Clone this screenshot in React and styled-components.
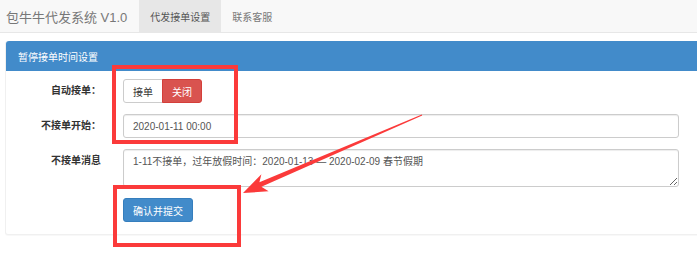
import React from "react";
import styled, { createGlobalStyle } from "styled-components";

const GlobalStyle = createGlobalStyle`
  html, body {
    margin: 0;
    padding: 0;
    background: #fff;
    overflow: hidden;
  }
  body {
    font-family: "Liberation Sans", "Noto Sans CJK SC", sans-serif;
    font-size: 10px;
    color: #333;
  }
`;

const Page = styled.div`
  position: relative;
  width: 697px;
  height: 279px;
`;

const Navbar = styled.nav`
  display: flex;
  align-items: stretch;
  height: 32px;
  background: #f8f8f8;
  border-bottom: 1px solid #e7e7e7;
`;

const Brand = styled.div`
  display: flex;
  align-items: center;
  padding: 0 12px 0 6px;
  font-size: 13px;
  color: #777;
`;

const NavItem = styled.div`
  display: flex;
  align-items: center;
  padding: 0 11px;
  font-size: 10px;
  color: ${(p) => (p.active ? "#555" : "#777")};
  background: ${(p) => (p.active ? "#e7e7e7" : "transparent")};
`;

const Panel = styled.section`
  width: 720px;
  margin: 8px 0 0 5px;
  background: #fff;
  border: 1px solid #f0f0f0;
  border-top: 0;
  border-radius: 3px;
  box-shadow: 0 1px 1px rgba(0, 0, 0, 0.03);
`;

const PanelHeading = styled.div`
  display: flex;
  align-items: center;
  height: 30px;
  padding-left: 12px;
  background: #428bca;
  border-radius: 3px 3px 0 0;
  color: #fff;
  font-size: 10px;
`;

const PanelBody = styled.div`
  display: flex;
  flex-direction: column;
  gap: 11px;
  padding: 8px 47px 12px 0;
`;

const FormRow = styled.div`
  display: flex;
  align-items: flex-start;
  gap: 22px;
`;

const Label = styled.label`
  width: 95px;
  flex: none;
  text-align: right;
  font-weight: bold;
  line-height: 24px;
  color: #333;
`;

const Control = styled.div`
  flex: 1;
  display: flex;
`;

const BtnGroup = styled.div`
  display: flex;
`;

const ToggleBtn = styled.button`
  height: 24px;
  padding: 0 9px;
  font-family: inherit;
  font-size: 10px;
  border: 1px solid ${(p) => (p.on ? "#d43f3a" : "#ccc")};
  background: ${(p) => (p.on ? "#d9534f" : "#fff")};
  color: ${(p) => (p.on ? "#fff" : "#333")};
  border-radius: 0;
  &:first-child {
    border-radius: 3px 0 0 3px;
  }
  &:last-child {
    border-radius: 0 3px 3px 0;
    margin-left: -1px;
  }
`;

const TextInput = styled.input`
  flex: 1;
  box-sizing: border-box;
  height: 24px;
  padding: 0 9px;
  font-family: inherit;
  font-size: 10px;
  color: #555;
  border: 1px solid #ccc;
  border-radius: 3px;
  box-shadow: inset 0 1px 1px rgba(0, 0, 0, 0.075);
  outline: none;
`;

const TextArea = styled.textarea`
  flex: 1;
  box-sizing: border-box;
  height: 38px;
  padding: 5px 9px;
  font-family: inherit;
  font-size: 10px;
  line-height: 14px;
  color: #555;
  border: 1px solid #ccc;
  border-radius: 3px;
  box-shadow: inset 0 1px 1px rgba(0, 0, 0, 0.075);
  outline: none;
`;

const SubmitBtn = styled.button`
  height: 24px;
  padding: 0 9px;
  font-family: inherit;
  font-size: 10px;
  color: #fff;
  background: #428bca;
  border: 1px solid #357ebd;
  border-radius: 3px;
`;

const Overlay = styled.svg`
  position: absolute;
  left: 0;
  top: 0;
  pointer-events: none;
`;

const Annotations = () => (
  <Overlay width="697" height="279" viewBox="0 0 697 279">
    <rect x="114" y="67" width="122" height="75" fill="none" stroke="#fb3a3a" strokeWidth="4" />
    <rect x="115" y="187" width="124" height="58" fill="none" stroke="#fb3a3a" strokeWidth="4" />
    <polygon
      fill="#fb3a3a"
      points="421.8,114.5 259.4,182.2 261.4,174.2 243,193 268.6,191.3 261.4,186.8 422.2,115.5"
    />
  </Overlay>
);

export default function App() {
  return (
    <Page>
      <GlobalStyle />
      <Navbar>
        <Brand>包牛牛代发系统 V1.0</Brand>
        <NavItem active>代发接单设置</NavItem>
        <NavItem>联系客服</NavItem>
      </Navbar>
      <Panel>
        <PanelHeading>暂停接单时间设置</PanelHeading>
        <PanelBody>
          <FormRow>
            <Label>自动接单：</Label>
            <Control>
              <BtnGroup>
                <ToggleBtn>接单</ToggleBtn>
                <ToggleBtn on>关闭</ToggleBtn>
              </BtnGroup>
            </Control>
          </FormRow>
          <FormRow>
            <Label>不接单开始：</Label>
            <Control>
              <TextInput defaultValue="2020-01-11 00:00" />
            </Control>
          </FormRow>
          <FormRow>
            <Label>不接单消息</Label>
            <Control>
              <TextArea defaultValue="1-11不接单，过年放假时间：2020-01-13 — 2020-02-09 春节假期" />
            </Control>
          </FormRow>
          <FormRow>
            <Label />
            <Control>
              <SubmitBtn>确认并提交</SubmitBtn>
            </Control>
          </FormRow>
        </PanelBody>
      </Panel>
      <Annotations />
    </Page>
  );
}
